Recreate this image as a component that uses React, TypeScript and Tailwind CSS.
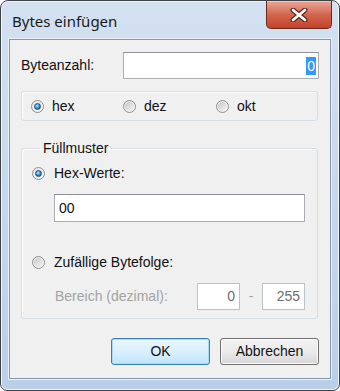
import React from 'react';

function Radio({ checked, disabled }: { checked?: boolean; disabled?: boolean }) {
  return (
    <span className="relative flex h-[13px] w-[13px] shrink-0 items-center justify-center rounded-full border border-[#8f8f8f] bg-gradient-to-br from-[#e8e8e8] to-[#f8f8f8]">
      {checked ? (
        <span className="h-[7px] w-[7px] rounded-full border border-[#1b4d77] bg-[radial-gradient(circle_at_40%_35%,#b9e6ff,#2a8bd2_55%,#0f4f85)]" />
      ) : (
        <span className={disabled ? 'h-[9px] w-[9px] rounded-full bg-[#dcdcdc]' : 'h-[9px] w-[9px] rounded-full bg-gradient-to-br from-[#c8c8c8] to-[#f4f4f4]'} />
      )}
    </span>
  );
}

function CloseButton() {
  return (
    <div className="mr-[7px] flex h-[28px] w-[66px] items-center justify-center rounded-b-[5px] border border-t-0 border-[#6a2a1e] bg-gradient-to-b from-[#e9a899] via-[#d4664f] to-[#c2402a] shadow-[inset_0_1px_0_#f4c6bb]">
      <svg width="18" height="14" viewBox="0 0 18 14">
        <path d="M3 2 L15 12 M15 2 L3 12" stroke="#5a2a22" strokeWidth="5" strokeLinecap="round" />
        <path d="M3 2 L15 12 M15 2 L3 12" stroke="#ffffff" strokeWidth="2.6" strokeLinecap="round" />
      </svg>
    </div>
  );
}

export default function App() {
  return (
    <div className="h-[391px] w-[340px] bg-white" style={{ fontFamily: '"Liberation Sans", Arial, sans-serif' }}>
      <div className="flex h-full w-full flex-col rounded-t-[8px] rounded-b-[7px] border border-[#3f4348] bg-gradient-to-b from-[#d3e1f1] via-[#c6d8ec] to-[#b9cfe8] shadow-[inset_0_0_0_1px_#eef4fb]">
        {/* title bar */}
        <div className="flex h-[38px] shrink-0 items-start justify-between">
          <span className="mt-[9px] pl-[11px] text-[15px] text-[#1a1a1a]" style={{ fontFamily: '"Noto Sans", "Open Sans", sans-serif' }}>
            Bytes einfügen
          </span>
          <CloseButton />
        </div>

        {/* client area */}
        <div className="mx-[8px] flex flex-1 flex-col border border-[#8396ad] bg-[#f0f0f0] pl-[11px] pr-[12px] text-[14px] text-[#111] shadow-[0_0_0_1px_#eaf1f9]">
          <div className="mt-[12px] flex h-[27px] items-center justify-between">
            <span>Byteanzahl:</span>
            <div className="mr-[-1px] flex h-[27px] w-[196px] items-center justify-end border border-[#abadb3] border-t-[#8e9196] bg-white pr-[2px]">
              <span className="bg-[#3399ff] px-[1px] leading-[18px] text-white">0</span>
            </div>
          </div>

          <div className="mt-[12px] flex h-[30px] items-center rounded-[3px] border border-[#d5dfe5] pl-[9px] shadow-[inset_1px_1px_0_#fff]">
            <div className="flex w-[92px] items-center gap-[8px]">
              <Radio checked />
              <span>hex</span>
            </div>
            <div className="flex w-[93px] items-center gap-[8px]">
              <Radio />
              <span>dez</span>
            </div>
            <div className="flex items-center gap-[8px]">
              <Radio />
              <span>okt</span>
            </div>
          </div>

          <fieldset className="mt-[19px] h-[179px] rounded-[3px] border border-[#d5dfe5] px-[10px] shadow-[inset_1px_1px_0_#fff]">
            <legend className="ml-[8px] px-[3px] leading-[16px]">Füllmuster</legend>
            <div className="mt-[7px] flex items-center gap-[9px]">
              <Radio checked />
              <span>Hex-Werte:</span>
            </div>
            <div className="ml-[22px] mt-[10px] flex h-[28px] w-[251px] items-center border border-[#abadb3] border-t-[#8e9196] bg-white pl-[4px]">
              00
            </div>
            <div className="mt-[30px] flex items-center gap-[9px]">
              <Radio />
              <span>Zufällige Bytefolge:</span>
            </div>
            <div className="ml-[23px] mt-[10px] flex items-center text-[#a3a3a3]">
              <span className="w-[142px]">Bereich (dezimal):</span>
              <div className="flex h-[27px] w-[43px] items-center justify-end border border-[#bcc2c8] bg-white pr-[4px] text-[#6d6d6d]">0</div>
              <span className="w-[22px] text-center">-</span>
              <div className="flex h-[27px] w-[43px] items-center justify-end border border-[#bcc2c8] bg-white pr-[4px] text-[#6d6d6d]">255</div>
            </div>
          </fieldset>

          <div className="mt-[19px] flex justify-end gap-[10px]">
            <button className="h-[27px] w-[99px] rounded-[3px] border border-[#3c7fb1] bg-gradient-to-b from-[#eaf6fd] via-[#d9f0fc] to-[#bee6fd] text-[14px] text-[#111] shadow-[inset_0_0_0_1px_#a8dcf6]">
              OK
            </button>
            <button className="mr-[-1px] h-[27px] w-[99px] rounded-[3px] border border-[#707070] bg-gradient-to-b from-[#f2f2f2] via-[#ebebeb] to-[#d6d6d6] text-[14px] text-[#111] shadow-[inset_0_0_0_1px_#fcfcfc]">
              Abbrechen
            </button>
          </div>
        </div>
        <div className="h-[11px] shrink-0" />
      </div>
    </div>
  );
}
